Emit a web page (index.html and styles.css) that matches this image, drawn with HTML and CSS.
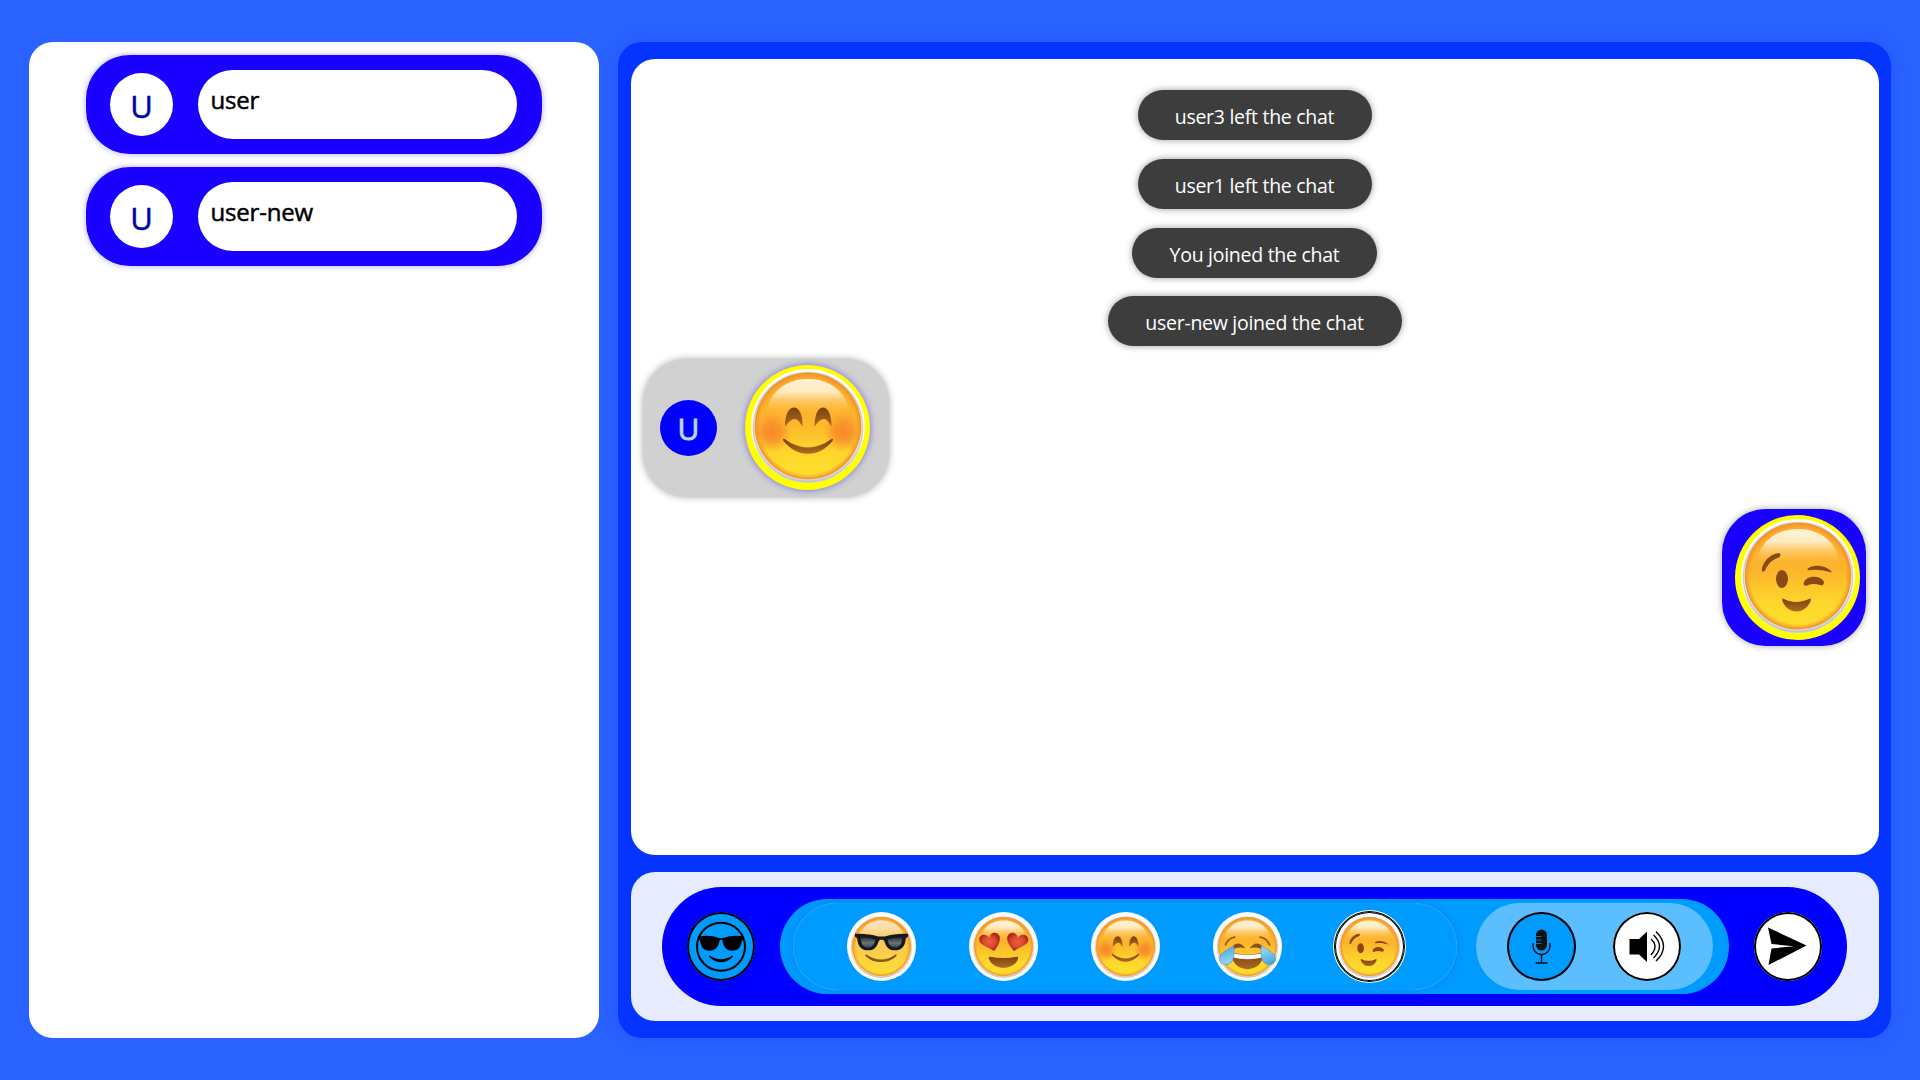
FILE: index.html
```html
<!DOCTYPE html>
<html lang="en">
<head>
<meta charset="utf-8">
<title>Chat</title>
<link rel="stylesheet" href="styles.css">
</head>
<body>
<svg class="defs" width="0" height="0" aria-hidden="true">
  <defs>
    <linearGradient id="face" x1="0" y1="0" x2="0" y2="1">
      <stop offset="0" stop-color="#fcab2a"/><stop offset=".45" stop-color="#fdb52c"/><stop offset=".75" stop-color="#fdd62b"/><stop offset="1" stop-color="#fde02b"/>
    </linearGradient>
    <linearGradient id="shine" x1="0" y1="0" x2="0" y2="1">
      <stop offset="0" stop-color="#fff4d8"/><stop offset=".35" stop-color="#ffeac0"/><stop offset="1" stop-color="#fdb52c" stop-opacity="0"/>
    </linearGradient>
    <linearGradient id="rim" x1="0" y1="0" x2="0" y2="1">
      <stop offset="0" stop-color="#fff"/><stop offset=".6" stop-color="#f4f4f4"/><stop offset="1" stop-color="#d4d4d4"/>
    </linearGradient>
    <linearGradient id="brown" x1="0" y1="0" x2="0" y2="1">
      <stop offset="0" stop-color="#7d4210"/><stop offset="1" stop-color="#ae6a20"/>
    </linearGradient>
    <radialGradient id="edge"><stop offset=".9" stop-color="#f7932a" stop-opacity="0"/><stop offset="1" stop-color="#f48a2a"/></radialGradient>
    <radialGradient id="blush"><stop offset="0" stop-color="#f8862a"/><stop offset=".45" stop-color="#f88c2a" stop-opacity=".8"/><stop offset="1" stop-color="#f9952a" stop-opacity="0"/></radialGradient>
    <radialGradient id="heart"><stop offset="0" stop-color="#f0603c"/><stop offset=".6" stop-color="#d8482c"/><stop offset="1" stop-color="#a8281c"/></radialGradient>
    <linearGradient id="tear" x1="0" y1="0" x2="1" y2="1"><stop offset="0" stop-color="#3ea0dc"/><stop offset=".5" stop-color="#8fd4f6"/><stop offset="1" stop-color="#3f9fd8"/></linearGradient>
    <linearGradient id="lens" x1="0" y1="0" x2="0" y2="1"><stop offset="0" stop-color="#2c3236"/><stop offset=".55" stop-color="#6b7377"/><stop offset="1" stop-color="#42494d"/></linearGradient>
    <linearGradient id="pale" x1="0" y1="0" x2="0" y2="1"><stop offset="0" stop-color="#f6dcb0" stop-opacity=".7"/><stop offset="1" stop-color="#f6d34c" stop-opacity=".3"/></linearGradient>

    <symbol id="ball" viewBox="0 0 114 114">
      <circle cx="57" cy="57" r="57" fill="url(#rim)"/>
      <circle cx="57" cy="58" r="54.500" fill="none" stroke="#bdbdb5" stroke-width="1.400" opacity=".7"/>
      <circle cx="57" cy="57" r="53" fill="url(#face)"/>
      <circle cx="57" cy="57" r="53.300" fill="url(#edge)"/>
      <path d="M15 47C17 23 35 10 57 10s40 13 42 37z" fill="url(#shine)"/>
    </symbol>
    <symbol id="smile" viewBox="0 0 114 114">
      <use href="#ball"/>
      <circle cx="21" cy="63" r="20" fill="url(#blush)"/><circle cx="92" cy="63" r="20" fill="url(#blush)"/>
      <path d="M34 57.500C34 45 38 38.500 43 38.500s9 7 8.500 19c-3-5-5-7.500-8-7.500s-6 3-9.500 7.500zM63.500 57.500C63.500 45 67.500 38.500 72 38.500s9 7 8.500 19c-3-5-5-7.500-8-7.500s-6 3-9 7.500z" fill="url(#brown)"/>
      <path d="M33.500 70q23.500 17 47 0c1.500-.5 2 .5 1 2-13 17-36 17-49 0-1-1.500-.5-2.500 1-2z" fill="url(#brown)"/>
    </symbol>
    <symbol id="wink" viewBox="0 0 114 114">
      <use href="#ball"/>
      <path d="M20.700 51c1-9 9-16 17-17 3 1 2 4-1 5-6 2-9.500 6-12.500 12-1 2-3.500 2-3.500 0zM67 49.500c6-5 20-2.500 24 4-8-2-13-3.500-21-2.500-4 .5-4-.5-3-1.500z" fill="#8a4a18"/>
      <ellipse cx="41" cy="60" rx="6" ry="9" fill="#8a4a18"/>
      <path d="M63 63c3-7 17-7 20 0 0 3-2 4-4 3-4-1.500-9-1.500-13 .5-3 1-4-1.500-3-3.500z" fill="#8a4a18"/>
      <path d="M42 79.500c8 4.500 18 4.500 27 0 1 0 1 2 0 4-6 12-21 12-27 0-1-2-1-4 0-4z" fill="url(#brown)"/>
    </symbol>
    <symbol id="love" viewBox="0 0 114 114">
      <use href="#ball"/>
      <path d="M33 75.500q24 5 48 0c3 0 3 3 2 5-9 20-43 20-52 0-1-2-1-5 2-5z" fill="url(#brown)"/>
      <path d="M40 65C25 56 13 54 13 44c0-9 13-12 18-3 2-11 16-12 19-2 2 8-3 18-10 26z" fill="url(#heart)"/>
      <path d="M76 65C69 57 62 47 64 39c3-10 17-9 19 2 5-9 19-6 19 3 0 10-11 12-26 21z" fill="url(#heart)"/>
    </symbol>
    <symbol id="joy" viewBox="0 0 114 114">
      <use href="#ball"/>
      <path d="M17 54q5-12 17-14M97 54q-5-12-17-14" fill="none" stroke="#95581c" stroke-width="3" stroke-linecap="round"/>
      <path d="M31 55q12-9 22 5-10-3-20 1zM83 55q-12-9-22 5 10-3 20 1z" fill="#8a4f18"/>
      <path d="M29 68q28 7 56 0c4 40-60 40-56 0z" fill="url(#brown)"/>
      <path d="M30 69q27 6 54 0v8q-27 6-54 0z" fill="#fafafa"/>
      <path d="M32 56C23 61 7 68 6 79c0 12 19 15 24 3 3-8 3-17 2-26zM82 56c9 5 25 12 26 23 0 12-19 15-24 3-3-8-3-17-2-26z" fill="url(#tear)" stroke="#3b8fc8" stroke-width="1"/>
    </symbol>
    <symbol id="cool" viewBox="0 0 114 114">
      <use href="#ball"/>
      <circle cx="57" cy="57" r="47" fill="url(#pale)"/>
      <path d="M29 71q28 19 54 0 2 0 1 3c-15 15-41 15-56 0q-1-3 1-3z" fill="#86591b"/>
      <path d="M9 34q24-1 42 5h12q18-6 42-5v5l-4 3c-1 15-8 22-20 22-11 0-16-7-19-17-2-3-8-3-10 0-3 10-8 17-19 17-12 0-19-7-20-22l-4-3z" fill="#16191b"/>
      <path d="M19 41q14-1 27 4c-2 9-6 14-13 14-8 0-13-6-14-18zM95 41q-14-1-27 4c2 9 6 14 13 14 8 0 13-6 14-18z" fill="url(#lens)"/>
    </symbol>
  </defs>
</svg>

<main class="app">
  <aside class="users">
    <div class="user"><span class="user-avatar">U</span><span class="user-name">user</span></div>
    <div class="user"><span class="user-avatar">U</span><span class="user-name">user-new</span></div>
  </aside>
  <section class="room">
    <div class="chat">
      <div class="notices">
        <p class="notice n-left">user3 left the chat</p>
        <p class="notice n-left">user1 left the chat</p>
        <p class="notice n-you">You joined the chat</p>
        <p class="notice n-new">user-new joined the chat</p>
      </div>
      <div class="message incoming">
        <span class="sender">U</span>
        <span class="sticker"><svg><use href="#smile"/></svg></span>
      </div>
      <div class="message outgoing">
        <span class="sticker"><svg><use href="#wink"/></svg></span>
      </div>
    </div>
    <footer class="composer">
      <div class="bar">
        <button class="round toggle" aria-label="Emoji">
          <svg viewBox="0 0 68 69"><circle cx="34" cy="34.700" r="24" fill="none" stroke="#000" stroke-width="2"/><path d="M11.500 24.300q13-1.500 20 1.800h5q8-3.300 20-1.800v3l-1.600 1.500c-.8 6.500-3.700 9.900-9.700 9.900-6 0-9-4.500-10-11h-2.400c-1 6.500-4 11-10 11-6 0-8.900-3.400-9.700-9.900l-1.600-1.500z"/><path d="M22.800 43.500q11.200 7.500 22.400 0c1 0 1 1 0 2-6.500 6.300-15.900 6.300-22.400 0-1-1-1-2 0-2z"/></svg>
        </button>
        <div class="tools">
          <div class="emojis">
            <button class="emoji" aria-label="Cool"><svg><use href="#cool"/></svg></button>
            <button class="emoji" aria-label="Love"><svg><use href="#love"/></svg></button>
            <button class="emoji" aria-label="Smile"><svg><use href="#smile"/></svg></button>
            <button class="emoji" aria-label="Joy"><svg><use href="#joy"/></svg></button>
            <button class="emoji selected" aria-label="Wink"><svg><use href="#wink"/></svg></button>
          </div>
          <div class="audio">
            <button class="round mic" aria-label="Microphone">
              <svg viewBox="0 0 69 69"><rect x="29" y="17.500" width="11" height="21" rx="5.500" fill="#111"/><path d="M28.500 24.500h6M28.500 28h6M28.500 31.500h6" stroke="#009bff" stroke-width=".7"/><path d="M26 31v3a8.500 8.500 0 0 0 17 0v-3M34.500 42.500v8M28.500 51h12" fill="none" stroke="#111" stroke-width="1.400"/></svg>
            </button>
            <button class="round speaker" aria-label="Speaker">
              <svg viewBox="0 0 68 69"><path d="M16.500 27h9.500l8-7.500v30.500l-8-7.500h-9.500z"/><path d="M38 27q8 7 0 16M40.500 23q12 11 0 23M43 19.500q15 15 0 29.500" fill="none" stroke="#000" stroke-width="1.400"/></svg>
            </button>
          </div>
        </div>
        <button class="round send" aria-label="Send">
          <svg viewBox="0 0 68 69"><path d="M14 15.500 52.500 33.500 14.500 53 17.500 36.500 40 34.300 17.500 32z"/></svg>
        </button>
      </div>
    </footer>
  </section>
</main>
</body>
</html>
```
FILE: styles.css
```css
* { box-sizing: border-box; }
body {
  margin: 0;
  background: #2962ff;
  font-family: "Segoe UI", "Open Sans", "Noto Sans", sans-serif;
}
button { padding: 0; border: 0; font: inherit; }
svg { display: block; width: 100%; height: 100%; }
svg.defs { position: absolute; width: 0; height: 0; }

.app {
  display: grid;
  grid-template-columns: 570px 1273px;
  gap: 19px;
  height: 1080px;
  padding: 42px 29px;
}

.users {
  display: flex;
  flex-direction: column;
  align-items: center;
  gap: 13px;
  padding: 13px 0 0;
  border-radius: 24px;
  background: #fff;
}
.user {
  display: flex;
  align-items: center;
  gap: 25px;
  width: 456px;
  height: 99px;
  padding: 0 24px;
  border-radius: 44px;
  background: #1a00ff;
  box-shadow: 0 0 6px rgba(26, 0, 255, .35);
}
.user-avatar {
  width: 63px;
  height: 63px;
  border-radius: 50%;
  background: #fff;
  color: #0000a8;
  font-size: 31px;
  line-height: 66px;
  text-align: center;
  -webkit-text-stroke: .5px currentColor;
}
.user-name {
  width: 319px;
  height: 69px;
  padding-left: 12.500px;
  border-radius: 35px;
  background: #fff;
  color: #000;
  font-size: 24px;
  letter-spacing: -.2px;
  line-height: 59px;
  -webkit-text-stroke: .5px currentColor;
}

.room {
  display: flex;
  flex-direction: column;
  gap: 17px;
  padding: 17px 12px 17px 13px;
  border-radius: 24px;
  background: #0533ff;
  box-shadow: 0 0 14px rgba(5, 51, 255, .25);
}
.chat {
  display: flex;
  flex-direction: column;
  height: 796px;
  padding: 31px 13px 0 12px;
  border-radius: 24px;
  background: #fff;
}
.notices {
  display: flex;
  flex-direction: column;
  align-items: center;
  gap: 18.8px;
}
.notice {
  height: 50px;
  margin: 0;
  border-radius: 25px;
  background: #3d3d3d;
  box-shadow: 0 0 7px rgba(0, 0, 0, .4);
  color: #fff;
  font-size: 19.500px;
  letter-spacing: -.28px;
  line-height: 53.500px;
  text-align: center;
  white-space: nowrap;
}
.n-left { width: 234px; }
.n-you { width: 245px; }
.n-new { width: 294px; }

.message {
  display: flex;
  align-items: center;
  border-radius: 44px;
  box-shadow: 0 0 7px rgba(0, 0, 0, .35);
}
.incoming {
  gap: 28px;
  width: 246px;
  height: 138px;
  margin-top: 12.600px;
  padding-left: 17px;
  background: #d1d1d1;
}
.outgoing {
  align-self: flex-end;
  width: 144px;
  height: 137px;
  margin-top: 12.400px;
  padding-left: 13px;
  background: #1a00ff;
}
.sender {
  width: 57px;
  height: 56px;
  border-radius: 50%;
  background: #00f;
  color: #b5dcff;
  font-size: 30px;
  line-height: 58px;
  text-align: center;
  -webkit-text-stroke: .9px currentColor;
}
.sticker {
  width: 125px;
  height: 125px;
  padding: 4px 5px 7px 6px;
  border-radius: 50%;
  background: #ff0;
  box-shadow: 0 0 7px rgba(26, 0, 255, .5);
}

.composer {
  height: 149px;
  padding: 15px 32px 15px 31px;
  border-radius: 24px;
  background: #e6ebff;
}
.bar {
  display: flex;
  align-items: center;
  gap: 25px;
  height: 119px;
  padding: 0 25px;
  border-radius: 60px;
  background: #00f;
}
.round {
  width: 68px;
  height: 69px;
  border-radius: 50%;
  background: #fff;
  box-shadow: inset 0 0 0 2px #000;
}
.toggle, .mic { background: #009bff; }
.mic { width: 69px; }
.tools {
  display: flex;
  align-items: center;
  justify-content: space-between;
  width: 949px;
  height: 95px;
  padding: 0 16px 0 13px;
  border-radius: 48px;
  background: #009bff;
}
.emojis {
  display: flex;
  align-items: center;
  gap: 53px;
  width: 664px;
  height: 87px;
  padding-left: 54px;
  border-radius: 44px;
  background: #009bff;
  box-shadow: 0 0 8px rgba(0, 90, 255, .35), inset 0 0 1px rgba(255, 255, 255, .6);
}
.emoji {
  width: 69px;
  height: 69px;
  padding: 3px;
  border-radius: 50%;
  background: #fff;
}
.selected { box-shadow: 0 0 0 1px #000, 0 0 0 2px #fff, inset 0 0 0 1px #000; }
.audio {
  display: flex;
  align-items: center;
  gap: 37px;
  width: 237px;
  height: 87px;
  padding-left: 31px;
  border-radius: 44px;
  background: #5abeff;
}
```
